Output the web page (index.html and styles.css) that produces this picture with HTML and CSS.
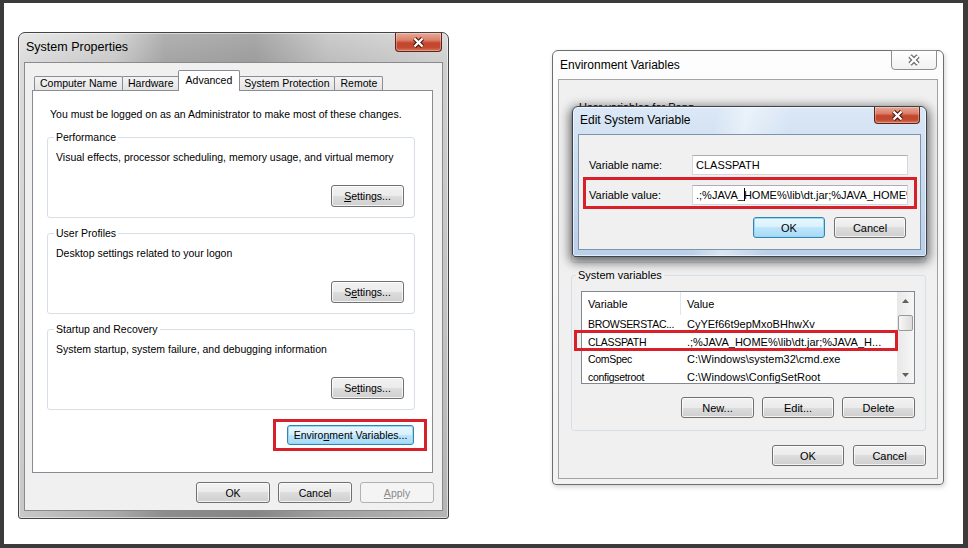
FILE: index.html
```html
<!DOCTYPE html>
<html lang="en">
<head>
<meta charset="utf-8">
<title>System Properties - Environment Variables</title>
<link rel="stylesheet" href="styles.css">
</head>
<body>
<div class="desktop">

  <section class="win aero sysprops">
    <header class="titlebar">
      <span class="title">System Properties</span>
      <button class="close close-red close-sp" aria-label="Close">
        <svg width="13" height="11" viewBox="0 0 13 11"><path d="M2.5 1.5l8 8M10.5 1.5l-8 8" stroke="#4a1208" stroke-width="4.4"/><path d="M2.5 1.5l8 8M10.5 1.5l-8 8" stroke="#fff" stroke-width="2.4"/></svg>
      </button>
    </header>
    <div class="client">
      <div class="tabs">
        <span class="tab">Computer Name</span>
        <span class="tab">Hardware</span>
        <span class="tab tab-active">Advanced</span>
        <span class="tab">System Protection</span>
        <span class="tab">Remote</span>
      </div>
      <div class="tabpanel">
        <p class="note">You must be logged on as an Administrator to make most of these changes.</p>
        <div class="group sp-group sp-first">
          <span class="group-label">Performance</span>
          <p class="group-desc">Visual effects, processor scheduling, memory usage, and virtual memory</p>
          <button class="btn btn-settings"><u>S</u>ettings...</button>
        </div>
        <div class="group sp-group">
          <span class="group-label">User Profiles</span>
          <p class="group-desc">Desktop settings related to your logon</p>
          <button class="btn btn-settings">S<u>e</u>ttings...</button>
        </div>
        <div class="group sp-group">
          <span class="group-label">Startup and Recovery</span>
          <p class="group-desc">System startup, system failure, and debugging information</p>
          <button class="btn btn-settings">Se<u>t</u>tings...</button>
        </div>
        <div class="annot annot-env">
          <button class="btn btn-default btn-env">Enviro<u>n</u>ment Variables...</button>
        </div>
      </div>
      <div class="footer sp-footer">
        <button class="btn btn-sp">OK</button>
        <button class="btn btn-sp">Cancel</button>
        <button class="btn btn-sp btn-disabled"><u>A</u>pply</button>
      </div>
    </div>
  </section>

  <section class="win basic envvars">
    <header class="titlebar">
      <span class="title">Environment Variables</span>
      <button class="close close-plain" aria-label="Close">
        <svg width="14" height="12" viewBox="0 0 14 12"><path d="M3 2l8 8M11 2l-8 8" stroke="#6a6a6a" stroke-width="4.6"/><path d="M3 2l8 8M11 2l-8 8" stroke="#fff" stroke-width="2.4"/></svg>
      </button>
    </header>
    <div class="client">
      <div class="group user-group">
        <span class="group-label">User variables for Peng</span>
      </div>
      <div class="group sys-group">
        <span class="group-label">System variables</span>
        <div class="listview">
          <div class="lv-main">
            <div class="lv-head">
              <span class="lv-c1">Variable</span>
              <span class="lv-c2">Value</span>
            </div>
            <div class="lv-row"><span class="lv-c1">BROWSERSTAC...</span><span class="lv-c2">CyYEf66t9epMxoBHhwXv</span></div>
            <div class="lv-row"><span class="lv-c1">CLASSPATH</span><span class="lv-c2">.;%JAVA_HOME%\lib\dt.jar;%JAVA_H...</span></div>
            <div class="lv-row"><span class="lv-c1">ComSpec</span><span class="lv-c2">C:\Windows\system32\cmd.exe</span></div>
            <div class="lv-row"><span class="lv-c1">configsetroot</span><span class="lv-c2">C:\Windows\ConfigSetRoot</span></div>
          </div>
          <div class="lv-scroll">
            <span class="sb-btn"><svg width="7" height="4" viewBox="0 0 7 4"><path d="M0 4L3.5 0L7 4z" fill="#606060"/></svg></span>
            <span class="sb-thumb"></span>
            <span class="sb-btn sb-down"><svg width="7" height="4" viewBox="0 0 7 4"><path d="M0 0L3.5 4L7 0z" fill="#606060"/></svg></span>
          </div>
          <span class="annot annot-row"></span>
        </div>
        <div class="btn-row sg-buttons">
          <button class="btn btn-ev btn-w73">New...</button>
          <button class="btn btn-ev btn-w72">Edit...</button>
          <button class="btn btn-ev btn-w73">Delete</button>
        </div>
      </div>
      <div class="btn-row ev-footer">
        <button class="btn btn-ev btn-w72">OK</button>
        <button class="btn btn-ev btn-w73">Cancel</button>
      </div>
    </div>
  </section>

  <section class="win aero-blue editvar">
    <header class="titlebar">
      <span class="title">Edit System Variable</span>
      <button class="close close-red close-ed" aria-label="Close">
        <svg width="13" height="11" viewBox="0 0 13 11"><path d="M2.5 1.5l8 8M10.5 1.5l-8 8" stroke="#4a1208" stroke-width="4.4"/><path d="M2.5 1.5l8 8M10.5 1.5l-8 8" stroke="#fff" stroke-width="2.4"/></svg>
      </button>
    </header>
    <div class="client">
      <div class="field">
        <span class="field-label">Variable name:</span>
        <span class="input">CLASSPATH</span>
      </div>
      <div class="annot annot-field">
        <div class="field">
          <span class="field-label">Variable value:</span>
          <span class="input">.;%JAVA_<span class="caret"></span>HOME%\lib\dt.jar;%JAVA_HOME%\lib\tools.jar</span>
        </div>
      </div>
      <div class="btn-row dlg-buttons">
        <button class="btn btn-ev btn-default btn-w72">OK</button>
        <button class="btn btn-ev btn-w72">Cancel</button>
      </div>
    </div>
  </section>

</div>
</body>
</html>
```
FILE: styles.css
```css
* { box-sizing: border-box; }

html, body { margin: 0; padding: 0; }

body {
  width: 968px;
  height: 548px;
  overflow: hidden;
  background: #3b3b3b;
  font-family: "Liberation Sans", Arial, sans-serif;
  color: #000;
}

.desktop {
  position: relative;
  width: 959px;
  height: 541px;
  margin: 3px 5px 4px 4px;
  background: #fff;
}

p { margin: 0; }

/* ---------- windows ---------- */
.win {
  position: absolute;
  display: flex;
  flex-direction: column;
}

.titlebar {
  flex: none;
  display: flex;
  align-items: flex-start;
}

.title {
  font-size: 12px;
  line-height: 14px;
  white-space: nowrap;
}

.client {
  flex: 1;
  display: flex;
  flex-direction: column;
  background: #f0f0f0;
  border: 1px solid #8c8c8c;
  min-height: 0;
}

.close {
  margin-left: auto;
  padding: 0;
  display: flex;
  align-items: center;
  justify-content: center;
  border: 1px solid #5e2218;
  border-top: none;
  border-radius: 0 0 4px 4px;
}

.close-red {
  background: linear-gradient(#e9a896 0, #d9806a 40%, #c5452c 55%, #c14a31 80%, #d7775a 100%);
  box-shadow: inset 0 0 0 1px rgba(255, 255, 255, 0.3);
}

.close-plain {
  width: 46px;
  height: 20px;
  margin: -1px 1px 0 auto;
  border: 1px solid #8e8e8e;
  background: linear-gradient(#ffffff, #f1f1f1);
}

/* ---------- System Properties (aero grey) ---------- */
.sysprops {
  left: 14px;
  top: 29px;
  width: 431px;
  height: 487px;
  padding: 0 5px 7px;
  border: 1px solid #434343;
  border-radius: 7px 7px 3px 3px;
  background:
    linear-gradient(90deg, rgba(255,255,255,0.35) 0, rgba(255,255,255,0) 22%, rgba(0,0,0,0.18) 34%, rgba(0,0,0,0.22) 55%, rgba(0,0,0,0.06) 72%, rgba(255,255,255,0.12) 100%),
    linear-gradient(180deg, #d8d8d8 0, #c9c9c9 29px, #bababa 60%, #ababab 100%);
  box-shadow: inset 0 0 0 1px rgba(255, 255, 255, 0.5);
}

.sysprops .titlebar { height: 29px; }
.sysprops .title { margin: 7px 0 0 2px; font-size: 12.5px; }
.close-sp { width: 47px; height: 19px; margin-right: 1px; }

.sysprops .client {
  padding: 7px 9px 7px 7px;
  border-color: #8a8a8a;
  font-size: 10.5px;
}

.tabs {
  flex: none;
  position: relative;
  z-index: 1;
  display: flex;
  align-items: flex-end;
  height: 20px;
  padding-left: 3px;
}

.tab {
  height: 14px;
  line-height: 13px;
  padding: 0 5px;
  margin-left: -1px;
  border: 1px solid #898c95;
  border-bottom: none;
  border-radius: 2px 2px 0 0;
  background: linear-gradient(#f4f4f4, #e4e4e4);
  white-space: nowrap;
}

.tab-active {
  position: relative;
  z-index: 2;
  height: 21px;
  line-height: 18px;
  margin: 0 -1px -1px -2px;
  padding: 0 7px;
  background: #fff;
}

.tabpanel {
  flex: none;
  height: 383px;
  display: flex;
  flex-direction: column;
  padding: 0 17px 0 14px;
  background: #fff;
  border: 1px solid #898c95;
}

.note {
  margin: 16px 0 0 3px;
  line-height: 14px;
  white-space: nowrap;
}

.group {
  display: flex;
  flex-direction: column;
  border: 1px solid #d5dfe5;
  border-radius: 3px;
}

.group-label {
  align-self: flex-start;
  margin: -8px 0 0 -2px;
  padding: 0 2px;
  line-height: 14px;
  background: #fff;
  white-space: nowrap;
}

.sp-group {
  height: 81px;
  margin-top: 15px;
  padding: 0 10px 10px 8px;
}

.sp-first { margin-top: 16px; }

.group-desc {
  margin-top: 6px;
  line-height: 14px;
  white-space: nowrap;
}

/* ---------- buttons ---------- */
.btn {
  font: inherit;
  color: #000;
  padding: 0;
  display: flex;
  align-items: center;
  justify-content: center;
  white-space: nowrap;
  border: 1px solid #707070;
  border-radius: 3px;
  background: linear-gradient(#f2f2f2 0, #ebebeb 50%, #dddddd 50%, #cfcfcf 100%);
  box-shadow: inset 0 0 0 1px rgba(255, 255, 255, 0.75);
}

.btn-default {
  border-color: #3c7fb1;
  background: linear-gradient(#eaf6fd 0, #d9f0fc 50%, #bee6fd 50%, #a7d9f5 100%);
  box-shadow: inset 0 0 0 1px #8fdcf5;
}

.btn-disabled {
  color: #8a8a8a;
  border-color: #adb2b5;
  background: #f4f4f4;
  box-shadow: none;
}

.btn-settings {
  align-self: flex-end;
  margin-top: auto;
  width: 73px;
  height: 22px;
}

.annot { border: 3px solid #d8202b; }

.annot-env {
  align-self: flex-end;
  margin: 9px -12px 0 0;
  padding: 3px 10px 3px 11px;
}

.btn-env { width: 127px; height: 20px; }

.sp-footer {
  display: flex;
  justify-content: flex-end;
  gap: 8px;
  margin: auto -1px 0 0;
}

.btn-sp { width: 74px; height: 21px; }

/* ---------- Environment Variables (basic) ---------- */
.envvars {
  left: 548px;
  top: 47px;
  width: 392px;
  height: 435px;
  padding: 0 5px 5px;
  border: 1px solid #6e6e6e;
  border-radius: 6px 6px 4px 4px;
  background: linear-gradient(#fdfdfd, #f2f2f2);
  box-shadow: 1px 2px 5px rgba(0, 0, 0, 0.18);
  font-size: 11px;
}

.envvars .titlebar { height: 28px; }
.envvars .title { margin: 6px 0 0 2px; font-size: 12px; line-height: 16px; }

.envvars .client {
  padding: 0 11px 0 12px;
  border-color: #a3a3a3;
}

.envvars .group-label { background: #f0f0f0; }

.user-group {
  flex: none;
  height: 156px;
  margin-top: 27px;
}

.user-group .group-label { margin-left: 5px; }

.sys-group {
  flex: none;
  margin-top: 12px;
  padding: 0 10px 12px 9px;
}

.sys-group .group-label { margin-left: -5px; }

.listview {
  position: relative;
  display: flex;
  height: 93px;
  margin-top: 9px;
  border: 1px solid #828790;
  background: #fff;
}

.lv-main {
  flex: 1;
  overflow: hidden;
}

.lv-head, .lv-row {
  display: flex;
  align-items: center;
  white-space: nowrap;
}

.lv-head { height: 23px; }
.lv-row { height: 17.7px; }

.lv-c1 {
  flex: none;
  width: 99px;
  padding-left: 6px;
}

.lv-row .lv-c1 {
  font-size: 10.5px;
  letter-spacing: -0.3px;
}

.lv-head .lv-c1 {
  height: 100%;
  display: flex;
  align-items: center;
  border-right: 1px solid #e3e5e8;
}

.lv-c2 { padding-left: 6px; }

.lv-scroll {
  flex: none;
  width: 17px;
  display: flex;
  flex-direction: column;
  background: linear-gradient(90deg, #e8e8e8, #f6f6f6);
}

.sb-btn {
  height: 17px;
  display: flex;
  align-items: center;
  justify-content: center;
  flex: none;
}

.sb-down { margin-top: auto; }

.sb-thumb {
  flex: none;
  height: 16px;
  margin: 6px 1px 0;
  border: 1px solid #9a9a9a;
  border-radius: 2px;
  background: linear-gradient(90deg, #f7f7f7, #dcdcdc);
}

.annot-row {
  position: absolute;
  left: -8px;
  top: 38px;
  width: 324px;
  height: 21px;
}

.btn-row {
  display: flex;
  justify-content: flex-end;
}

.btn-ev { height: 21px; font-size: 11px; }
.btn-w72 { width: 72px; }
.btn-w73 { width: 73px; }

.sg-buttons { gap: 8px; margin-top: 13px; }
.ev-footer { gap: 9px; margin-top: 14px; }

/* ---------- Edit System Variable (aero blue) ---------- */
.editvar {
  left: 568px;
  top: 103px;
  width: 355px;
  height: 151px;
  padding: 0 5px 6px;
  border: 1px solid #3b434d;
  border-radius: 6px 6px 3px 3px;
  background:
    linear-gradient(100deg, rgba(255,255,255,0) 0, rgba(255,255,255,0) 38%, rgba(255,255,255,0.45) 46%, rgba(255,255,255,0) 58%),
    linear-gradient(180deg, #dbe8f6 0, #cadcf0 40%, #b9d0ea 100%);
  box-shadow: 0 3px 11px 2px rgba(0, 0, 0, 0.6), inset 0 0 0 1px rgba(255, 255, 255, 0.6);
  font-size: 11px;
  z-index: 5;
}

.editvar .titlebar { height: 27px; }
.editvar .title { margin: 6px 0 0 2px; }
.close-ed { width: 46px; height: 17px; margin-right: 1px; }

.editvar .client {
  padding: 20px 12px 0 10px;
  border-color: #7f93aa;
}

.field {
  display: flex;
  align-items: center;
}

.field-label {
  flex: none;
  width: 103px;
  white-space: nowrap;
}

.input {
  flex: 1;
  min-width: 0;
  height: 20px;
  line-height: 18px;
  padding-left: 3px;
  overflow: hidden;
  white-space: nowrap;
  background: #fff;
  border: 1px solid #d3d6dc;
  border-top-color: #abadb3;
}

.caret {
  display: inline-block;
  width: 1px;
  height: 13px;
  margin-right: -1px;
  vertical-align: -2px;
  background: #000;
}

.annot-field {
  margin: 2px -9px 0 -6px;
  padding: 5px 6px 1px 3px;
}

.dlg-buttons { gap: 9px; margin: 8px 2px 0 0; }
```
